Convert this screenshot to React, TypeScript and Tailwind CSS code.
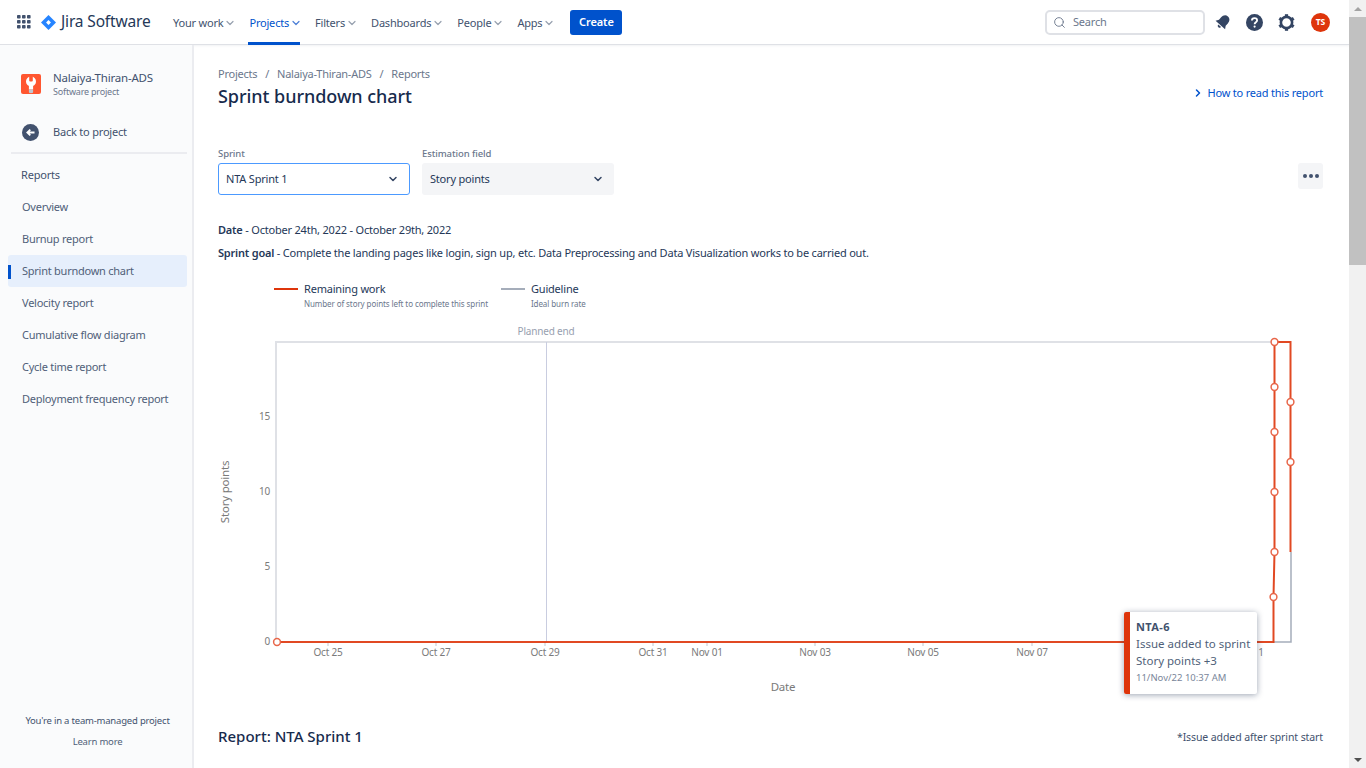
import { ChevronDown, ChevronRight, Search } from "lucide-react";

const navItems = [
  { label: "Your work", active: false },
  { label: "Projects", active: true },
  { label: "Filters", active: false },
  { label: "Dashboards", active: false },
  { label: "People", active: false },
  { label: "Apps", active: false },
];

const sideItems = [
  "Overview",
  "Burnup report",
  "Sprint burndown chart",
  "Velocity report",
  "Cumulative flow diagram",
  "Cycle time report",
  "Deployment frequency report",
];

const xTicks = [
  { x: 328, label: "Oct 25" },
  { x: 436, label: "Oct 27" },
  { x: 545, label: "Oct 29" },
  { x: 653, label: "Oct 31" },
  { x: 707, label: "Nov 01" },
  { x: 815, label: "Nov 03" },
  { x: 923, label: "Nov 05" },
  { x: 1032, label: "Nov 07" },
  { x: 1248, label: "Nov 11" },
];

const yTicks = [
  { y: 642, label: "0" },
  { y: 567, label: "5" },
  { y: 492, label: "10" },
  { y: 417, label: "15" },
];

const markers = [
  [277, 642],
  [1273.5, 597],
  [1274.5, 552],
  [1274.5, 492],
  [1274.5, 432],
  [1274.5, 387],
  [1274.5, 342],
  [1290.5, 402],
  [1290.5, 462],
];

function AppGrid() {
  return (
    <svg width="16" height="16" viewBox="0 0 16 16" fill="#42526e">
      {[1, 6, 11].flatMap((y) =>
        [1, 6, 11].map((x) => <rect key={`${x}-${y}`} x={x} y={y} width="3.6" height="3.6" rx="0.8" />),
      )}
    </svg>
  );
}

function JiraLogo() {
  return (
    <svg width="15" height="15" viewBox="0 0 16 16" className="shrink-0">
      <path d="M8 0 16 8 8 16 0 8Z" fill="#2684ff" />
      <path d="M8 5.4 10.6 8 8 10.6 5.4 8Z" fill="#fff" />
    </svg>
  );
}

function ProjectIcon() {
  return (
    <svg width="20" height="20" viewBox="0 0 20 20">
      <rect width="20" height="20" rx="2" fill="#ff5630" />
      <circle cx="10" cy="7.5" r="5" fill="#fff" />
      <rect x="8.2" y="1" width="3.6" height="6.5" rx="1" fill="#ff5630" />
      <rect x="7.9" y="10" width="4.2" height="5.5" fill="#fff" />
      <path d="M7.9 15.5h4.2V18c0 .8-.9 1.2-2.1 1.2S7.9 18.800 7.900 18Z" fill="#c1c7d0" />
    </svg>
  );
}

function BackIcon() {
  return (
    <svg width="17" height="17" viewBox="0 0 16 16">
      <circle cx="8" cy="8" r="8" fill="#42526e" />
      <path d="M11.8 8H5.2M7.8 5.2 5 8l2.8 2.8" fill="none" stroke="#fff" strokeWidth="1.7" />
    </svg>
  );
}

function BellIcon() {
  return (
    <svg width="16" height="16" viewBox="0 0 16 16" fill="#344563">
      <g transform="rotate(42 8 8)">
        <path d="M8 .6C5 .6 3.500 3 3.500 5.800V9L1.600 12H14.400L12.500 9V5.800C12.500 3 11 .6 8 .6Z" />
        <path d="M6.100 13H9.900A1.900 1.900 0 0 1 6.100 13Z" />
      </g>
    </svg>
  );
}

function HelpIcon() {
  return (
    <svg width="17" height="17" viewBox="0 0 17 17">
      <circle cx="8.5" cy="8.5" r="8.5" fill="#344563" />
      <path d="M5.9 6.6c0-1.5 1.1-2.4 2.6-2.4s2.6.9 2.6 2.2c0 1.9-2.5 1.9-2.5 3.8" fill="none" stroke="#fff" strokeWidth="1.8" />
      <circle cx="8.6" cy="12.6" r="1.1" fill="#fff" />
    </svg>
  );
}

function GearIcon() {
  return (
    <svg width="17" height="17" viewBox="0 0 17 17">
      <circle cx="8.5" cy="8.5" r="5.6" fill="none" stroke="#344563" strokeWidth="2.6" />
      {[0, 60, 120, 180, 240, 300].map((a) => (
        <rect key={a} x="6.9" y="0.2" width="3.2" height="3" fill="#344563" transform={`rotate(${a} 8.5 8.5)`} />
      ))}
    </svg>
  );
}

function TopBar() {
  return (
    <header className="flex h-[45px] shrink-0 items-center border-b border-[#dfe1e6] bg-white pl-[16px] pr-[19px] shadow-[0_1px_2px_rgba(9,30,66,0.06)]">
      <AppGrid />
      <div className="ml-[9px] flex w-[108px] items-center gap-[5px]">
        <JiraLogo />
        <span className="whitespace-nowrap text-[15.5px] leading-none tracking-[-0.01em] text-[#253858]">Jira Software</span>
      </div>
      <nav className="ml-[24px] flex h-full items-center gap-[12px]">
        {navItems.map((item) => (
          <div
            key={item.label}
            className={`relative flex h-full items-center pt-[2px] text-[11px] ${
              item.active ? "text-[#0052cc]" : "text-[#42526e]"
            }`}
          >
            {item.label}
            <ChevronDown
              size={12}
              strokeWidth={2.4}
              className={`mx-[1px] ${item.active ? "text-[#4c7fd6]" : "text-[#97a0af]"}`}
            />
            {item.active && <span className="absolute -bottom-px -left-px right-[3px] h-[3px] bg-[#0052cc]" />}
          </div>
        ))}
      </nav>
      <button className="ml-[14px] h-[25px] w-[52px] rounded-[3px] bg-[#0052cc] pt-[1px] text-[11px] font-semibold tracking-[-0.1px] text-white">
        Create
      </button>
      <div className="ml-auto flex h-[25px] w-[160px] items-center gap-[7px] rounded-[5px] border-2 border-[#dfe1e6] pl-[6px]">
        <Search size={13} strokeWidth={1.7} className="text-[#6b778c]" />
        <span className="text-[11px] text-[#6b778c]">Search</span>
      </div>
      <div className="ml-[10px] flex items-center gap-[15px]">
        <BellIcon />
        <HelpIcon />
        <GearIcon />
        <div className="ml-[1px] grid h-[19px] w-[19px] place-items-center rounded-full bg-[#de350b] text-[8.5px] font-bold tracking-normal text-white">
          TS
        </div>
      </div>
    </header>
  );
}

function Sidebar() {
  return (
    <aside className="flex w-[194px] shrink-0 flex-col border-r-2 border-[#ebecf0] bg-[#fafbfc] pl-[8px] pr-[5px]">
      <div className="mt-[25px] flex items-center gap-[12px] pl-[13px]">
        <ProjectIcon />
        <div>
          <div className="text-[11.5px] leading-[16px] text-[#42526e]">Nalaiya-Thiran-ADS</div>
          <div className="text-[9px] leading-[12px] text-[#6b778c]">Software project</div>
        </div>
      </div>
      <div className="mt-[24px] flex items-center gap-[14px] pl-[14px] leading-[20px] text-[#42526e]">
        <BackIcon />
        Back to project
      </div>
      <div className="ml-[3px] mt-[10px] h-[2px] bg-[#ebecf0]" />
      <div className="mt-[11px] h-[20px] pl-[13px] leading-[20px] text-[#42526e]">Reports</div>
      <ul className="mt-[6px]">
        {sideItems.map((item) => {
          const active = item === "Sprint burndown chart";
          return (
            <li
              key={item}
              className={`relative flex h-[32px] items-center rounded-[3px] pl-[14px] tracking-[-0.25px] text-[#505f79] ${
                active ? "bg-[#e6effc]" : ""
              }`}
            >
              {active && <span className="absolute left-0 top-[10px] h-[14px] w-[3px] bg-[#0052cc]" />}
              {item}
            </li>
          );
        })}
      </ul>
      <div className="mt-auto pb-[19px] text-center text-[9.5px] text-[#42526e]">
        <div className="leading-[14px]">You're in a team-managed project</div>
        <div className="mt-[7px] leading-[14px] text-[#505f79]">Learn more</div>
      </div>
    </aside>
  );
}

function Field({ label, value, focused, width }: { label: string; value: string; focused?: boolean; width: string }) {
  return (
    <div className={width}>
      <div className="text-[9.5px] font-medium leading-[13px] tracking-[-0.1px] text-[#6b778c]">{label}</div>
      <div
        className={`mt-[3px] flex h-[32px] items-center justify-between rounded-[3px] pl-[7px] pr-[10px] text-[#253858] ${
          focused ? "border border-[#4c9aff] bg-white" : "bg-[#f4f5f7] pl-[8px] text-[#42526e]"
        }`}
      >
        {value}
        <ChevronDown size={12} strokeWidth={3} className="text-[#344563]" />
      </div>
    </div>
  );
}

function Chart() {
  return (
    <div className="relative mt-[12px] h-[380px]">
      <svg width="1105" height="380" viewBox="218 322 1105 380" className="block">
        <g fontFamily="'Noto Sans', sans-serif" fontSize="10" fill="#7a7a7a">
          <text x="546" y="335" textAnchor="middle" fill="#97a0af">
            Planned end
          </text>
          {yTicks.map((t) => (
            <text key={t.label} x="270" y={t.y + 3} textAnchor="end">
              {t.label}
            </text>
          ))}
          {xTicks.map((t) => (
            <g key={t.label}>
              <line x1={t.x} x2={t.x} y1="642" y2="646" stroke="#c1c7d0" />
              <text x={t.x} y="656" textAnchor="middle">
                {t.label}
              </text>
            </g>
          ))}
          <text x="783" y="691" textAnchor="middle" fontSize="11.5">
            Date
          </text>
          <text x="0" y="0" textAnchor="middle" fontSize="11.5" transform="translate(229 492) rotate(-90)">
            Story points
          </text>
        </g>
        <path d="M276 642V342H1275" fill="none" stroke="#dfe1e6" strokeWidth="2" />
        <line x1="546.5" x2="546.5" y1="342" y2="642" stroke="#c9cde0" />
        <path d="M1273 642H1291V552" fill="none" stroke="#a5adba" strokeWidth="1.5" />
        <path
          d="M277 642H1273.5V597L1274.5 552V342H1290.5V552"
          fill="none"
          stroke="#de350b"
          strokeWidth="2"
          strokeOpacity="0.9"
        />
        {markers.map(([x, y]) => (
          <circle key={`${x}-${y}`} cx={x} cy={y} r="3.4" fill="#fff" stroke="#e8674a" strokeWidth="1.5" />
        ))}
      </svg>
      <div className="absolute left-[906px] top-[290px] flex h-[82px] w-[133px] overflow-hidden rounded-[2px] bg-white tracking-normal shadow-[0_1px_6px_rgba(9,30,66,0.4)]">
        <div className="w-[6px] bg-[#de350b]" />
        <div className="pl-[6px] pt-[6px] text-[11.5px] leading-[17px] text-[#505f79]">
          <div className="text-[11px] font-bold tracking-[0.4px] text-[#42526e]">NTA-6</div>
          <div>Issue added to sprint</div>
          <div>Story points +3</div>
          <div className="text-[9.5px] text-[#7a869a]">11/Nov/22 10:37 AM</div>
        </div>
      </div>
    </div>
  );
}

function Main() {
  return (
    <main className="min-w-0 flex-1 pl-[24px] pr-[26px]">
      <div className="mt-[21px] flex h-[16px] items-center gap-[8px] tracking-[-0.25px] text-[#6b778c]">
        <span>Projects</span>
        <span>/</span>
        <span>Nalaiya-Thiran-ADS</span>
        <span>/</span>
        <span>Reports</span>
      </div>
      <div className="flex items-start justify-between">
        <h1 className="text-[18px] font-medium leading-[28px] tracking-[-0.05px] text-[#172b4d]">Sprint burndown chart</h1>
        <div className="mt-[3px] flex items-center gap-[4px] leading-[16px] text-[#0052cc]">
          <ChevronRight size={12} strokeWidth={3} />
          How to read this report
        </div>
      </div>
      <div className="mt-[37px] flex items-end gap-[12px]">
        <Field label="Sprint" value="NTA Sprint 1" focused width="w-[192px]" />
        <Field label="Estimation field" value="Story points" width="w-[192px]" />
        <div className="mb-[6px] ml-auto grid h-[26px] w-[25px] place-items-center rounded-[3px] bg-[#f4f5f7] pb-[1px]">
          <div className="flex gap-[2px]">
            <span className="h-[4px] w-[4px] rounded-full bg-[#42526e]" />
            <span className="h-[4px] w-[4px] rounded-full bg-[#42526e]" />
            <span className="h-[4px] w-[4px] rounded-full bg-[#42526e]" />
          </div>
        </div>
      </div>
      <p className="mt-[27px] leading-[16px] text-[#253858]">
        <b className="font-semibold">Date</b> - October 24th, 2022 - October 29th, 2022
      </p>
      <p className="mt-[7px] leading-[16px] text-[#253858]">
        <b className="font-semibold">Sprint goal</b> - Complete the landing pages like login, sign up, etc. Data
        Preprocessing and Data Visualization works to be carried out.
      </p>
      <div className="ml-[56px] mt-[20px] flex gap-[13px]">
        <div className="flex">
          <span className="mt-[7px] h-[2px] w-[24px] bg-[#de350b]" />
          <div className="ml-[6px]">
            <div className="leading-[16px] text-[#253858]">Remaining work</div>
            <div className="text-[8px] leading-[13px] tracking-[-0.09px] text-[#6b778c]">Number of story points left to complete this sprint</div>
          </div>
        </div>
        <div className="flex">
          <span className="mt-[7px] h-[2px] w-[24px] bg-[#a5adba]" />
          <div className="ml-[6px]">
            <div className="leading-[16px] text-[#253858]">Guideline</div>
            <div className="text-[8px] leading-[13px] tracking-[-0.09px] text-[#6b778c]">Ideal burn rate</div>
          </div>
        </div>
      </div>
      <Chart />
      <div className="mt-[22px] flex items-center justify-between">
        <h2 className="text-[15px] font-medium leading-[24px] tracking-normal text-[#172b4d]">Report: NTA Sprint 1</h2>
        <span className="pt-[3px] text-[10.5px] tracking-[-0.1px] text-[#42526e]">*Issue added after sprint start</span>
      </div>
    </main>
  );
}

function Scrollbar() {
  return (
    <div className="flex w-[17px] shrink-0 flex-col bg-[#f1f1f1]">
      <div className="grid h-[17px] place-items-center">
        <span className="h-0 w-0 border-x-[4px] border-b-[4px] border-x-transparent border-b-[#a3a3a3]" />
      </div>
      <div className="h-[248px] bg-[#c1c1c1]" />
      <div className="mt-auto grid h-[17px] place-items-center">
        <span className="h-0 w-0 border-x-[4px] border-t-[4px] border-x-transparent border-t-[#505050]" />
      </div>
    </div>
  );
}

export default function App() {
  return (
    <div className="flex h-screen overflow-hidden bg-white font-['Noto_Sans',sans-serif] text-[11px] tracking-[-0.2px]">
      <div className="flex min-w-0 flex-1 flex-col">
        <TopBar />
        <div className="flex min-h-0 flex-1">
          <Sidebar />
          <Main />
        </div>
      </div>
      <Scrollbar />
    </div>
  );
}
